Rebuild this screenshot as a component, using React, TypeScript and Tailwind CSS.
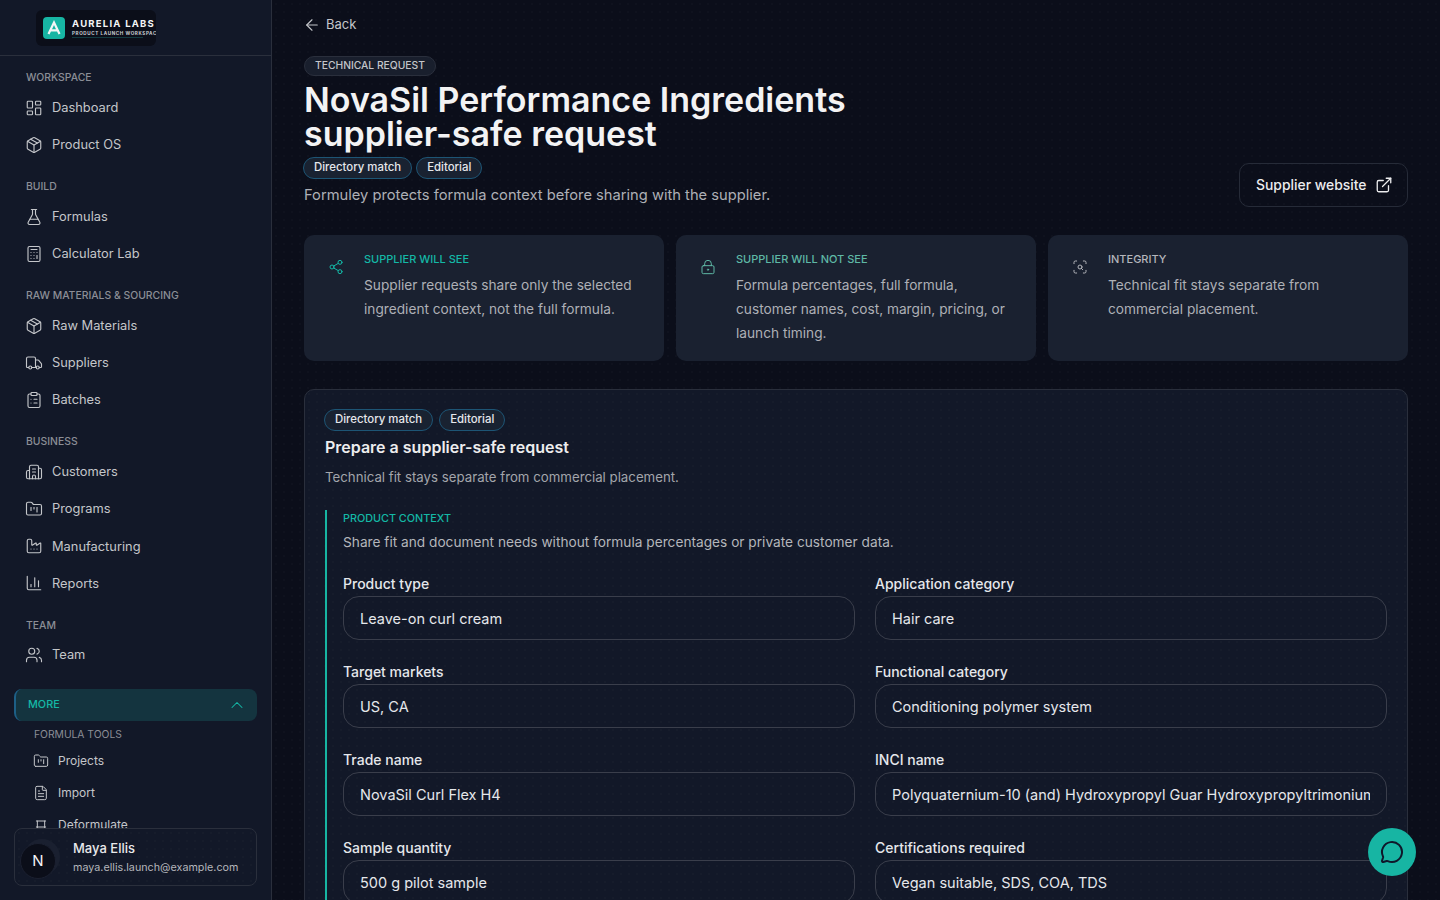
import React from "react";
import {
  LayoutDashboard, Package, FlaskConical, Calculator, Truck, ClipboardList, Building2,
  FolderKanban, Factory, ChartColumn, Users, ChevronUp, FileText,
  Share2, LockKeyhole, ScanSearch, ExternalLink, MessageCircle, ArrowLeft,
} from "lucide-react";

type Item = { label: string; icon: React.ElementType };
const groups: { title: string; items: Item[] }[] = [
  { title: "WORKSPACE", items: [{ label: "Dashboard", icon: LayoutDashboard }, { label: "Product OS", icon: Package }] },
  { title: "BUILD", items: [{ label: "Formulas", icon: FlaskConical }, { label: "Calculator Lab", icon: Calculator }] },
  { title: "RAW MATERIALS & SOURCING", items: [{ label: "Raw Materials", icon: Package }, { label: "Suppliers", icon: Truck }, { label: "Batches", icon: ClipboardList }] },
  { title: "BUSINESS", items: [{ label: "Customers", icon: Building2 }, { label: "Programs", icon: FolderKanban }, { label: "Manufacturing", icon: Factory }, { label: "Reports", icon: ChartColumn }] },
  { title: "TEAM", items: [{ label: "Team", icon: Users }] },
];

const fields = [
  ["Product type", "Leave-on curl cream"],
  ["Application category", "Hair care"],
  ["Target markets", "US, CA"],
  ["Functional category", "Conditioning polymer system"],
  ["Trade name", "NovaSil Curl Flex H4"],
  ["INCI name", "Polyquaternium-10 (and) Hydroxypropyl Guar Hydroxypropyltrimonium Chloride"],
  ["Sample quantity", "500 g pilot sample"],
  ["Certifications required", "Vegan suitable, SDS, COA, TDS"],
];

const cards = [
  { icon: Share2, title: "SUPPLIER WILL SEE", color: "text-[#14b8a6]", text: ["Supplier requests share only the selected", "ingredient context, not the full formula."] },
  { icon: LockKeyhole, title: "SUPPLIER WILL NOT SEE", color: "text-[#5eb8a5]", text: ["Formula percentages, full formula,", "customer names, cost, margin, pricing, or", "launch timing."] },
  { icon: ScanSearch, title: "INTEGRITY", color: "text-[#b4b6bb]", text: ["Technical fit stays separate from", "commercial placement."] },
];

const dots = "bg-[radial-gradient(rgba(255,255,255,0.035)_0.6px,transparent_0.8px)] bg-[size:8px_8px]";

function DeformulateIcon() {
  return (
    <svg viewBox="0 0 24 24" width="16" height="16" fill="none" stroke="currentColor" strokeWidth="1.5" strokeLinecap="round" className="shrink-0">
      <path d="M5 6h14M6.5 6v12M17.5 6v12M5 15h14" />
    </svg>
  );
}

function Chip({ children }: { children: React.ReactNode }) {
  return (
    <span className="flex h-[22px] items-center rounded-full border border-[#1d5575] bg-[#192231] px-[10px] text-[11.4px] font-medium leading-none text-[#e5e7eb]">
      {children}
    </span>
  );
}

export default function App() {
  return (
    <div className="relative flex h-[900px] w-[1440px] overflow-hidden bg-[#0b0e1a] font-['Inter',sans-serif] text-[#e5e7eb]">
      <aside className="flex h-full w-[272px] shrink-0 flex-col border-r border-[#2a2f3c] bg-[#121828]">
        <div className="flex h-[56px] shrink-0 items-start border-b border-[#2a2f3c] pl-[36px] pt-[10px]">
          <div className="flex h-[36px] w-[120px] items-center gap-[7px] overflow-hidden rounded-[6px] bg-[#0b0e19] pl-[7px]">
            <div className="flex h-[22px] w-[22px] shrink-0 items-center justify-center rounded-[4px] bg-[#17b5a3]">
              <svg viewBox="0 0 16 16" className="h-[16px] w-[16px]" fill="none" stroke="#f4f6f6" strokeWidth="2.2">
                <path d="M2.5 14 8 2.5 13.5 14M4.6 10.4h6.8" />
              </svg>
            </div>
            <div className="w-[90px] shrink-0">
              <div className="whitespace-nowrap text-[9.5px] font-bold leading-[12px] tracking-[0.13em] text-[#f5f5f5]">AURELIA LABS</div>
              <div className="mt-[1px] whitespace-nowrap text-[4.6px] font-bold leading-[6px] tracking-[0.13em] text-[#c9ccd2]">PRODUCT LAUNCH WORKSPACE</div>
              <div className="h-px w-[71px] bg-[#123a40]" />
            </div>
          </div>
        </div>

        <div className="relative min-h-0 flex-1 overflow-hidden px-[14px] pt-[14px]">
          {groups.map((g) => (
            <div key={g.title} className="mb-[15.45px]">
              <div className="mb-[3px] pl-[12px] text-[10.4px] font-medium leading-[16px] text-[#8b8e96]">{g.title}</div>
              {g.items.map((it) => (
                <div key={it.label} className="flex h-[37.25px] items-center gap-[9px] pl-[11px] text-[12.85px] text-[#c4c6ca]">
                  <it.icon size={18} strokeWidth={1.5} className="shrink-0" />
                  <span>{it.label}</span>
                </div>
              ))}
            </div>
          ))}
          <div className="flex h-[32px] items-center justify-between rounded-[8px] border-l-2 border-[#1d5f86] bg-[#14343f] pl-[12px] pr-[10px] text-[#14b8a6]">
            <span className="text-[10.8px] font-medium">MORE</span>
            <ChevronUp size={20} strokeWidth={1.25} />
          </div>
          <div className="mb-[2.5px] mt-[5px] pl-[20px] text-[10.3px] leading-[16px] text-[#8b8e96]">FORMULA TOOLS</div>
          {[
            { label: "Projects", icon: <FolderKanban size={16} strokeWidth={1.5} className="shrink-0" /> },
            { label: "Import", icon: <FileText size={16} strokeWidth={1.5} className="shrink-0" /> },
            { label: "Deformulate", icon: <DeformulateIcon /> },
          ].map((it) => (
            <div key={it.label} className="flex h-[32px] items-center gap-[9px] pl-[19px] text-[12px] text-[#c4c6ca]">
              {it.icon}
              <span>{it.label}</span>
            </div>
          ))}
        </div>

        <div className="shrink-0 px-[14px] pb-[14px]">
          <div className={`flex h-[58px] items-start gap-[17px] rounded-[8px] border border-[#2a2f3c] bg-[#121828] pl-[5px] ${dots}`}>
            <div className="mt-[14px] flex h-[36px] w-[36px] shrink-0 items-center justify-center rounded-full border border-[#1b2030] bg-[#0b0e19] text-[15px] font-normal text-[#f3f4f6] shadow-[4px_-4px_0_#1a2030]">
              N
            </div>
            <div className="mt-[9px]">
              <div className="text-[13px] font-medium leading-[20px] text-[#e8e9eb]">Maya Ellis</div>
              <div className="mt-[1px] text-[10.75px] leading-[18px] text-[#b4b6bb]">maya.ellis.launch@example.com</div>
            </div>
          </div>
        </div>
      </aside>

      <main className={`min-w-0 flex-1 overflow-hidden px-[32px] pt-[16px] ${dots}`}>
        <div className="-ml-px flex h-[18px] items-center gap-[5px] text-[13px] text-[#c4c6ca]">
          <ArrowLeft size={18} strokeWidth={1.5} />
          <span>Back</span>
        </div>

        <div className="mt-[21px] flex items-end justify-between">
          <div>
            <span className="mt-[1px] inline-flex h-[20px] items-center rounded-full border border-[#2a2f3c] bg-[#191f2d] px-[10px] align-top text-[10.3px] font-medium text-[#c4c6ca]">
              TECHNICAL REQUEST
            </span>
            <h1 className="mt-[4px] text-[34px] font-semibold leading-[34px] text-[#f3f3f4]">
              NovaSil Performance Ingredients
              <br />
              supplier-safe request
            </h1>
            <div className="-ml-px mt-[6px] flex gap-[4px]">
              <Chip>Directory match</Chip>
              <Chip>Editorial</Chip>
            </div>
            <p className="mt-[6px] text-[14.7px] leading-[20px] text-[#aeb0b6]">
              Formuley protects formula context before sharing with the supplier.
            </p>
          </div>
          <div className="mb-[-2px] flex h-[44px] w-[169px] items-center gap-[8px] rounded-[10px] border border-[#262b38] pl-[16px] text-[13.9px] font-medium text-[#ececee]">
            Supplier website
            <ExternalLink size={18} strokeWidth={1.75} />
          </div>
        </div>

        <div className="mt-[30px] grid grid-cols-3 gap-[12px]">
          {cards.map((c) => (
            <div key={c.title} className="flex h-[126px] gap-[20px] rounded-[10px] bg-[#1a2130] pl-[24px] pt-[16px]">
              <c.icon size={16} strokeWidth={1.5} className={`mt-[8px] shrink-0 ${c.color}`} />
              <div>
                <div className={`text-[11px] font-medium leading-[16px] ${c.color}`}>{c.title}</div>
                <div className="mt-[6px] text-[13.7px] leading-[24px] text-[#aeb0b6]">
                  {c.text.map((t) => (
                    <div key={t}>{t}</div>
                  ))}
                </div>
              </div>
            </div>
          ))}
        </div>

        <section className={`mt-[28px] rounded-[10px] border border-[#2a2f3c] bg-[#121828] px-[20px] pb-[40px] pt-[19px] ${dots}`}>
          <div className="-ml-px flex gap-[6px]">
            <Chip>Directory match</Chip>
            <Chip>Editorial</Chip>
          </div>
          <h2 className="mt-[5px] text-[16px] font-semibold leading-[22px] text-[#ededee]">Prepare a supplier-safe request</h2>
          <p className="mt-[9px] text-[13.25px] leading-[20px] text-[#a3a5ab]">Technical fit stays separate from commercial placement.</p>

          <div className="mt-[23px] border-l-2 border-[#17b5a3] pl-[16px] pt-[1px]">
            <div className="text-[10.8px] font-medium leading-[16px] text-[#14b8a6]">PRODUCT CONTEXT</div>
            <p className="mt-[5px] text-[13.7px] leading-[20px] text-[#b4b6bb]">
              Share fit and document needs without formula percentages or private customer data.
            </p>
            <div className="mt-[22px] grid grid-cols-2 gap-x-[20px] gap-y-[22px]">
              {fields.map(([label, value]) => (
                <label key={label} className="block">
                  <span className="mb-[2px] block text-[14px] font-medium leading-[20px] text-[#e5e7eb]">{label}</span>
                  <input
                    readOnly
                    value={value}
                    className="h-[44px] w-full rounded-[16px] border border-[#3a3e4b] bg-transparent px-[16px] text-[14.5px] text-[#e5e7eb] outline-none"
                  />
                </label>
              ))}
            </div>
          </div>
        </section>
      </main>

      <div className="absolute left-[1368px] top-[828px] flex h-[48px] w-[48px] items-center justify-center rounded-full bg-[#17b5a3] text-[#0f172a]">
        <MessageCircle size={24} strokeWidth={2} />
      </div>
    </div>
  );
}
